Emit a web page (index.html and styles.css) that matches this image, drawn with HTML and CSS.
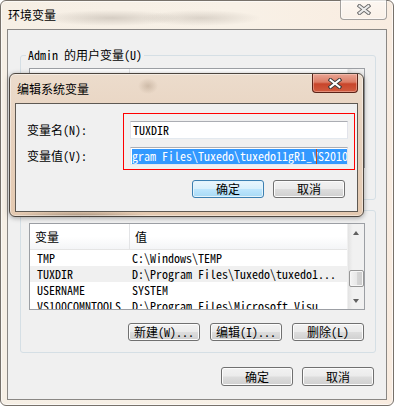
FILE: index.html
```html
<!DOCTYPE html>
<html lang="zh-CN">
<head>
<meta charset="utf-8">
<title>环境变量</title>
<link rel="stylesheet" href="styles.css">
</head>
<body>
<div class="window">
  <div class="titlebar">
    <span class="title">环境变量</span>
    <button class="close close-dim" aria-label="关闭">
      <svg width="14" height="11" viewBox="0 0 14 11"><path d="M2.5 2 L11.5 9 M11.5 2 L2.5 9" stroke="#6b6b6b" stroke-width="4" stroke-linecap="square" fill="none"/><path d="M2.5 2 L11.5 9 M11.5 2 L2.5 9" stroke="#ececec" stroke-width="2" stroke-linecap="square" fill="none"/></svg>
    </button>
  </div>
  <div class="client">
    <fieldset class="group group-user">
      <legend>Admin 的用户变量(U)</legend>
      <div class="listview lv-user">
        <div class="lv-main">
          <div class="lv-head"><span class="c1"></span><span class="c2"></span></div>
        </div>
        <div class="scrollbar"></div>
      </div>
    </fieldset>
    <fieldset class="group group-sys">
      <legend>系统变量(S)</legend>
      <div class="listview lv-sys">
        <div class="lv-main">
          <div class="lv-head"><span class="c1">变量</span><span class="c2">值</span></div>
          <div class="lv-row"><span class="c1">TMP</span><span class="c2">C:\Windows\TEMP</span></div>
          <div class="lv-row lv-hot"><span class="c1">TUXDIR</span><span class="c2">D:\Program Files\Tuxedo\tuxedo1...</span></div>
          <div class="lv-row"><span class="c1">USERNAME</span><span class="c2">SYSTEM</span></div>
          <div class="lv-row"><span class="c1">VS100COMNTOOLS</span><span class="c2">D:\Program Files\Microsoft Visu</span></div>
        </div>
        <div class="scrollbar"><span class="sb-btn"><span class="arr up"></span></span><span class="sb-track"><span class="sb-thumb"></span></span><span class="sb-btn"><span class="arr down"></span></span></div>
      </div>
      <div class="btn-row">
        <button class="btn">新建(W)...</button>
        <button class="btn">编辑(I)...</button>
        <button class="btn">删除(L)</button>
      </div>
    </fieldset>
    <div class="dlg-buttons">
      <button class="btn btn-tall">确定</button>
      <button class="btn btn-tall">取消</button>
    </div>
  </div>
</div>

<div class="edit-dialog">
  <div class="ed-titlebar">
    <span class="ed-title">编辑系统变量</span>
    <button class="close close-red" aria-label="关闭">
      <svg width="14" height="11" viewBox="0 0 14 11"><path d="M2.5 2 L11.5 9 M11.5 2 L2.5 9" stroke="#3a3a3a" stroke-width="4" stroke-linecap="square" fill="none"/><path d="M2.5 2 L11.5 9 M11.5 2 L2.5 9" stroke="#ffffff" stroke-width="2" stroke-linecap="square" fill="none"/></svg>
    </button>
  </div>
  <div class="ed-client">
    <div class="ed-form">
      <label class="ed-label">变量名(N):</label>
      <div class="field field-name">TUXDIR</div>
      <label class="ed-label">变量值(V):</label>
      <div class="field field-value"><span class="sel">gram Files\Tuxedo\tuxedo11gR1_V<span class="caret"></span>S2010</span></div>
    </div>
    <div class="ed-buttons">
      <button class="btn btn-default">确定</button>
      <button class="btn">取消</button>
    </div>
    <div class="annot"></div>
  </div>
</div>
</body>
</html>
```
FILE: styles.css
```css
* { box-sizing: border-box; }
html, body { margin: 0; padding: 0; }
body {
  position: relative;
  width: 394px;
  height: 406px;
  overflow: hidden;
  background: #ffffff;
  font-family: "Noto Sans Mono CJK SC", "Noto Sans CJK SC", "Liberation Mono", monospace;
  font-size: 12px;
  color: #000;
}

/* ---------- outer window ---------- */
.window {
  width: 394px;
  height: 406px;
  border: 1px solid #77716a;
  border-radius: 6px;
  background:
    radial-gradient(ellipse 70px 8px at 110px 17px, rgba(150,140,130,0.35), rgba(150,140,130,0) 100%),
    radial-gradient(ellipse 60px 8px at 200px 17px, rgba(150,140,130,0.3), rgba(150,140,130,0) 100%),
    linear-gradient(90deg, #f6efe5 0%, #f8f1e7 60%, #f9ece0 100%);
  display: flex;
  flex-direction: column;
  box-shadow: inset 0 0 0 1px rgba(255,255,255,0.6);
}
.titlebar {
  height: 28px;
  display: flex;
  align-items: flex-start;
  padding-left: 7px;
}
.title {
  font-family: "Noto Sans CJK SC", sans-serif;
  font-size: 12px;
  line-height: 14px;
  margin-top: 7px;
}
.close {
  margin-left: auto;
  padding: 0;
  border-radius: 0 0 4px 4px;
  display: flex;
  align-items: center;
  justify-content: center;
  cursor: default;
}
.close-dim {
  margin-right: 6px;
  margin-top: -1px;
  width: 47px;
  height: 20px;
  border: 1px solid rgba(90,90,90,0.55);
  border-top: none;
  background: linear-gradient(rgba(255,255,255,0.55), rgba(255,255,255,0.25));
  box-shadow: inset 0 0 0 1px rgba(255,255,255,0.5);
}
.client {
  margin: 0 6px;
  height: 371px;
  border: 1px solid #8a8784;
  background: #f0f0f0;
  display: flex;
  flex-direction: column;
}

/* ---------- group boxes ---------- */
.group {
  margin: 0 0 0 12px;
  width: 356px;
  min-width: 0;
  border: 1px solid #d5dfe5;
  border-radius: 3px;
  padding: 6px 10px 5px 8px;
}
.group legend {
  padding: 0 2px;
  margin-left: -3px;
  font-size: 12px;
  line-height: 14px;
}
.group-user { margin-top: 18px; height: 152px; }
.group-sys { margin-top: 3px; padding-bottom: 11px; }

.listview {
  display: flex;
  width: 336px;
  border: 1px solid #9c9fa4;
  background: #ffffff;
}
.lv-user { height: 100px; }
.lv-sys { height: 87px; }
.lv-main { flex: 1; overflow: hidden; }
.lv-head {
  display: flex;
  height: 26px;
  align-items: center;
  border-bottom: 1px solid #e5e5e5;
  background: linear-gradient(#ffffff 0%, #ffffff 50%, #f4f5f7 100%);
}
.lv-head .c1 { width: 100px; height: 100%; display: flex; align-items: center; padding-left: 5px; border-right: 1px solid #e3e4e6; }
.lv-head .c2 { padding-left: 5px; }
.lv-row { display: flex; height: 16px; line-height: 16px; white-space: nowrap; }
.lv-row .c1 { width: 100px; padding-left: 7px; flex: none; }
.lv-row .c2 { padding-left: 2px; }
.lv-hot { background: #f0f0f0; }

.scrollbar {
  width: 17px;
  display: flex;
  flex-direction: column;
  background: linear-gradient(90deg, #e3e3e3 0%, #f1f1f1 30%, #f1f1f1 100%);
  border-left: 1px solid #f0f0f0;
}
.sb-btn { height: 17px; display: flex; align-items: center; justify-content: center; flex: none; }
.sb-track { flex: 1; padding-top: 29px; display: flex; justify-content: center; }
.sb-thumb {
  width: 15px;
  height: 17px;
  border: 1px solid #979797;
  border-radius: 2px;
  background: linear-gradient(90deg, #f4f4f4 0%, #e8e8e8 50%, #d6d6d6 51%, #cdcdcd 100%);
  box-shadow: inset 0 0 0 1px #f6f6f6;
}
.arr { width: 0; height: 0; border-left: 3.5px solid transparent; border-right: 3.5px solid transparent; }
.arr.up { border-bottom: 4px solid #606060; }
.arr.down { border-top: 4px solid #606060; }

/* ---------- buttons ---------- */
.btn-row {
  display: flex;
  justify-content: flex-end;
  gap: 10px;
  margin-top: 13px;
  padding-right: 1px;
}
.btn {
  width: 72px;
  height: 18px;
  padding: 0;
  font-family: inherit;
  font-size: 12px;
  line-height: 16px;
  color: #000;
  border: 1px solid #707070;
  border-radius: 3px;
  background: linear-gradient(#f2f2f2 0%, #ebebeb 48%, #dddddd 52%, #cfcfcf 100%);
  box-shadow: inset 0 0 0 1px #fcfcfc;
}
.btn-tall { height: 19px; line-height: 17px; }
.btn-default {
  border-color: #3c7fb1;
  background: linear-gradient(#eaf6fd 0%, #d9f0fc 48%, #bee6fd 52%, #a7d9f5 100%);
  box-shadow: inset 0 0 0 1px #e4f4fc;
}
.dlg-buttons {
  display: flex;
  justify-content: flex-end;
  gap: 9px;
  margin-top: 14px;
  padding-right: 12px;
}

/* ---------- edit dialog (overlaying window) ---------- */
.edit-dialog {
  position: absolute;
  left: 9px;
  top: 73px;
  width: 355px;
  height: 144px;
  border: 1px solid #4d463f;
  border-radius: 6px;
  background:
    radial-gradient(ellipse 10px 8px at 138px 12px, rgba(120,95,70,0.25), rgba(120,95,70,0) 100%),
    radial-gradient(ellipse 70px 5px at 70px 142px, rgba(90,75,60,0.45), rgba(90,75,60,0) 100%),
    linear-gradient(180deg, #ecdccc 0%, #e7d2bf 40%, #e4c9b0 100%);
  box-shadow: inset 0 0 0 1px rgba(255,255,255,0.45), 0 1px 5px rgba(0,0,0,0.35);
  display: flex;
  flex-direction: column;
}
.ed-titlebar {
  height: 29px;
  display: flex;
  align-items: flex-start;
  padding-left: 7px;
}
.ed-title {
  font-family: "Noto Sans CJK SC", sans-serif;
  font-size: 12px;
  line-height: 14px;
  margin-top: 8px;
}
.close-red {
  margin-right: 5px;
  width: 46px;
  height: 19px;
  border: 1px solid #5b2318;
  border-top: none;
  background: linear-gradient(#e9a594 0%, #dc7d66 45%, #c8452b 55%, #d15c40 100%);
  box-shadow: inset 0 0 0 1px rgba(255,220,210,0.4);
}
.ed-client {
  position: relative;
  margin: 0 5px;
  height: 109px;
  border: 1px solid #5e5953;
  background: #f0f0f0;
  display: flex;
  flex-direction: column;
}
.ed-form {
  display: grid;
  grid-template-columns: 103px 218px;
  row-gap: 8px;
  padding: 17px 0 0 11px;
}
.ed-label { line-height: 18px; height: 18px; }
.field {
  height: 18px;
  line-height: 16px;
  background: #ffffff;
  border: 1px solid #e2e3ea;
  border-top-color: #abadb3;
  border-bottom-color: #e3e9ef;
  white-space: nowrap;
  overflow: hidden;
}
.field-name { padding-left: 2px; }
.field-value { padding-left: 1px; }
.sel {
  display: inline-block;
  background: #3399ff;
  color: #ffffff;
  line-height: 14px;
  margin-top: 1px;
}
.caret {
  display: inline-block;
  width: 1px;
  height: 15px;
  margin-left: -2px;
  margin-right: 1px;
  vertical-align: top;
  background: #c0501e;
}
.ed-buttons {
  display: flex;
  justify-content: flex-end;
  gap: 9px;
  margin-top: 15px;
  padding-right: 12px;
}
.annot {
  position: absolute;
  left: 107px;
  top: 9px;
  width: 232px;
  height: 57px;
  border: 1px solid #ff0000;
}
```
